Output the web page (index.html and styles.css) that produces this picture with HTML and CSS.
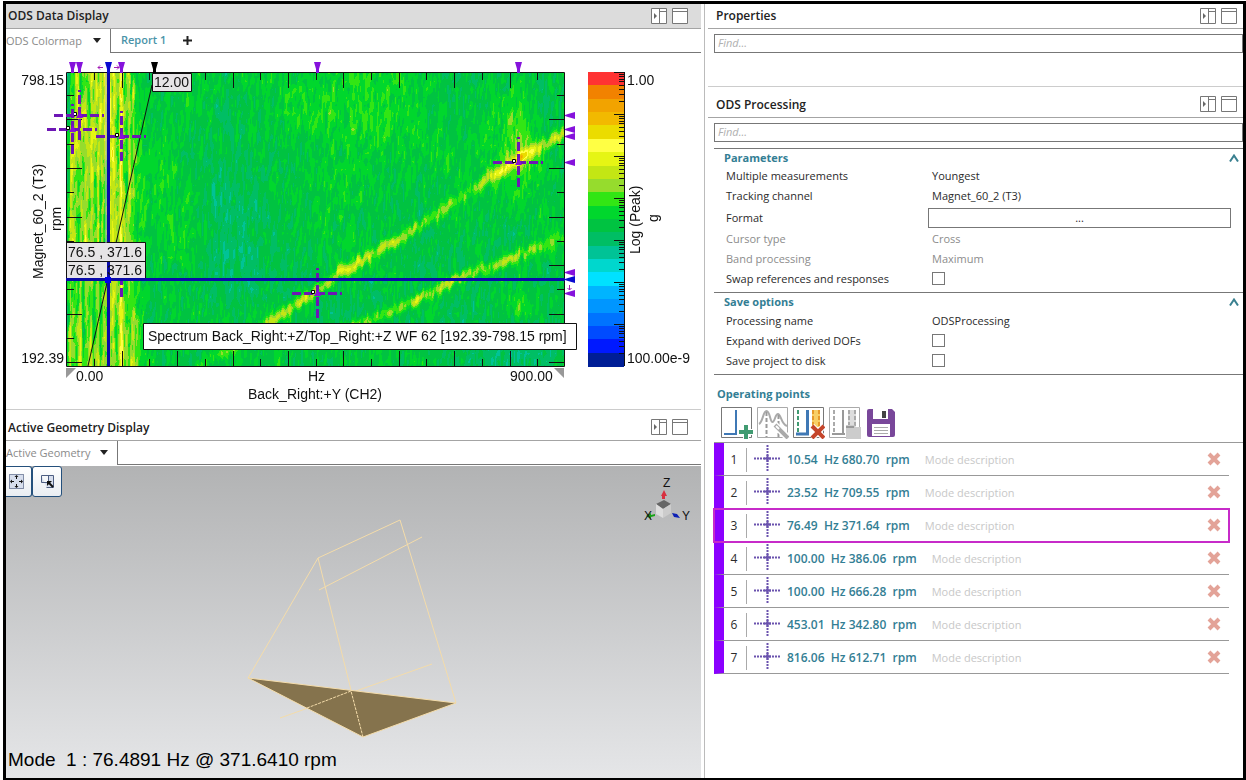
FILE: index.html
```html
<!DOCTYPE html>
<html lang="en">
<head>
<meta charset="utf-8">
<title>ODS Data Display</title>
<link rel="stylesheet" href="styles.css">
</head>
<body>
<svg class="defs" width="0" height="0" aria-hidden="true">
  <symbol id="i-dock" viewBox="0 0 16 16"><path d="M.5.5h15v15H.5zM8.500.5v15M8.500 3.500h7" fill="#fff" stroke="#777"/><path d="M3 5l3 3-3 3z" fill="#666"/></symbol>
  <symbol id="i-max" viewBox="0 0 16 16"><path d="M.5.5h15v15H.5zM.5 3.500h15" fill="#fff" stroke="#777"/></symbol>
  <symbol id="i-up" viewBox="0 0 10 8"><path d="M1 7.500L5 1.500 9 7.500" fill="none" stroke="#3a8090" stroke-width="2"/></symbol>
  <symbol id="i-x" viewBox="0 0 14 14"><path d="M2 2l10 10M12 2L2 12" stroke="#e3a398" stroke-width="4" fill="none"/></symbol>
  <symbol id="i-cross" viewBox="0 0 27 27"><path d="M0 13.500h27M13.500 0v27" stroke="#6a52ae" stroke-width="2" stroke-dasharray="2 1" fill="none"/><path d="M10 13.500h7M13.500 10v7" stroke="#6a52ae" stroke-width="2"/></symbol>
</svg>
<div class="frame">
  <main class="left">
    <section class="panel">
      <header class="bar bar-active"><h2>ODS Data Display</h2>
        <button class="icon" aria-label="Dock"><svg width="16" height="16"><use href="#i-dock"/></svg></button><button class="icon" aria-label="Maximize"><svg width="16" height="16"><use href="#i-max"/></svg></button></header>
      <nav class="tabs"><button class="tab-current">ODS Colormap<span class="caret"></span></button>
        <div class="tabs-rest"><button class="tab">Report 1</button><button class="add" aria-label="Add report"><svg width="9" height="9"><path d="M4.500 0v9M0 4.500h9" stroke="#222" stroke-width="2"/></svg></button></div></nav>
      <div class="plot">
        <svg id="chart" width="695" height="356" viewBox="6 53 695 356">
          <foreignObject x="67" y="73" width="498" height="293"><canvas id="map" width="498" height="293"></canvas></foreignObject>
          <path d="M152 85L88 366" stroke="#111" fill="none"/>
          <g id="ticks" stroke="#111" fill="none" shape-rendering="crispEdges"></g>
          <path d="M66.500 366.500V72.500H564.500V366.500z" stroke="#111" fill="none"/>
          <g id="crosses" stroke="#6d16b5" stroke-width="3" fill="none"></g>
          <path d="M66 243h79v35H66z" fill="#e6e4e6"/><path d="M66.500 242.500h79v36h-79zM66.500 261.500h79" stroke="#111" fill="none"/>
          <path d="M106 73v170" stroke="#bdb9c8"/>
          <path d="M108.500 73v169M108.500 262v104M66 279.500h499" stroke="#0a0aa8" stroke-width="3"/><path d="M105 277h6v6h-6z" fill="#0000e8"/>
          <path d="M152.500 73.500h39v18h-39z" fill="#e6e4e6" stroke="#111"/>
          <g id="markers"></g>
          <path d="M103 67.500h-5m2-2l-2 2 2 2M114 67.500h5m-2-2l2 2-2 2M569.500 285v5m-2-2l2 2 2-2" stroke="#a21bb5" fill="none"/>
          <path d="M66 368h10l-10 10zM554 368h10v10z" fill="#999"/>
          <g id="scale" shape-rendering="crispEdges"></g>
          <g class="labels">
            <text x="154" y="87">12.00</text><text x="68" y="257">76.5 , 371.6</text><text x="68" y="275">76.5 , 371.6</text>
            <text x="64" y="85" text-anchor="end">798.15</text><text x="64" y="363" text-anchor="end">192.39</text>
            <text x="76" y="381">0.00</text><text x="308" y="381">Hz</text><text x="510" y="381">900.00</text>
            <text x="248" y="399">Back_Right:+Y (CH2)</text>
            <text x="627" y="85">1.00</text><text x="627" y="363">100.00e-9</text>
            <text transform="translate(43 279) rotate(-90)">Magnet_60_2 (T3)</text><text transform="translate(61 231) rotate(-90)">rpm</text>
            <text transform="translate(640 254) rotate(-90)">Log (Peak)</text><text transform="translate(658 222) rotate(-90)">g</text>
          </g>
          <path d="M143.500 323.500h433v26h-433z" fill="#fff" stroke="#111"/>
          <text class="tip" x="148" y="341">Spectrum Back_Right:+Z/Top_Right:+Z WF 62 [192.39-798.15 rpm]</text>
        </svg>
      </div>
    </section>
    <section class="panel geometry">
      <header class="bar bar-tall"><h2>Active Geometry Display</h2>
        <button class="icon" aria-label="Dock"><svg width="16" height="16"><use href="#i-dock"/></svg></button><button class="icon" aria-label="Maximize"><svg width="16" height="16"><use href="#i-max"/></svg></button></header>
      <nav class="tabs"><button class="tab-current tab-geo">Active Geometry<span class="caret"></span></button><div class="tabs-rest"></div></nav>
      <div class="view">
        <svg class="model" width="695" height="312" viewBox="6 466 695 312">
          <g stroke="#f4dcaa" fill="none"><path d="M248 678L318 558 400 520 456 703M318 558L351 690M319 590L422 537M280 718L432 664"/>
          <path d="M248 678L456 703 363 737z" fill="#85734d"/><path d="M307 708L351 691 363 737" stroke-dasharray="3 1"/></g>
          <path d="M664 490l3 6h-2v3h-3v-3h-1z" fill="#d83040"/>
          <path d="M656 504l8-4 7 4-8 5z" fill="#666"/><path d="M656 504l7 5v9l-7-4z" fill="#ddd"/><path d="M663 509l8-5v9l-8 5z" fill="#ccc"/>
          <path d="M646 516l5-3v2l4-1v2l-4 1v2z" fill="#17a317"/><path d="M672 513l5 1 3 4-6-1z" fill="#0c20b5"/>
          <text class="axis" x="663" y="487">Z</text><text class="axis" x="644" y="520">X</text><text class="axis" x="682" y="520">Y</text>
        </svg>
        <div class="tools">
          <button class="tool tool-first" aria-label="Fit view"><svg width="15" height="15"><path d="M.5.5h14v14H.5z" fill="#d7deed" stroke="#1e315c" stroke-dasharray="1 1"/><path d="M7.500 5V2M7.500 10v3M5 7.500H2M10 7.500h3" stroke="#111"/><path d="M5.500 3h4l-2-2zM5.500 12h4l-2 2zM3 5.500v4l-2-2zM12 5.500v4l2-2z" fill="#111"/></svg></button><button class="tool" aria-label="Zoom region"><svg width="15" height="15"><path d="M1.500 1.500h12v12h-7M1.500 1.500v7h7v-7" fill="#d7deed" stroke="#4e5f83"/><path d="M13 13L9 9" stroke="#111" stroke-width="2"/><path d="M7 7h5l-5 5z" fill="#111"/></svg></button>
        </div>
        <p class="mode">Mode&nbsp; 1 : 76.4891 Hz @ 371.6410 rpm</p>
      </div>
    </section>
  </main>
  <aside class="right">
    <section class="props">
      <header class="bar"><h2>Properties</h2>
        <button class="icon" aria-label="Dock"><svg width="16" height="16"><use href="#i-dock"/></svg></button><button class="icon" aria-label="Maximize"><svg width="16" height="16"><use href="#i-max"/></svg></button></header>
      <input class="find" type="search" placeholder="Find..." aria-label="Find property">
    </section>
    <section>
      <header class="bar bar-tall"><h2>ODS Processing</h2>
        <button class="icon" aria-label="Dock"><svg width="16" height="16"><use href="#i-dock"/></svg></button><button class="icon" aria-label="Maximize"><svg width="16" height="16"><use href="#i-max"/></svg></button></header>
      <input class="find" type="search" placeholder="Find..." aria-label="Find setting">
      <div class="group"><h3>Parameters<button class="fold" aria-label="Collapse parameters"><svg width="10" height="8"><use href="#i-up"/></svg></button></h3>
        <div class="row"><span>Multiple measurements</span><span>Youngest</span></div>
        <div class="row"><span>Tracking channel</span><span>Magnet_60_2 (T3)</span></div>
        <div class="row row-button"><label for="format">Format</label><button id="format" class="wide">...</button></div>
        <div class="row muted"><span>Cursor type</span><span>Cross</span></div>
        <div class="row muted"><span>Band processing</span><span>Maximum</span></div>
        <div class="row"><label for="swap">Swap references and responses</label><input id="swap" type="checkbox"></div>
      </div>
      <div class="group group-last"><h3>Save options<button class="fold" aria-label="Collapse save options"><svg width="10" height="8"><use href="#i-up"/></svg></button></h3>
        <div class="row"><span>Processing name</span><span>ODSProcessing</span></div>
        <div class="row"><label for="dofs">Expand with derived DOFs</label><input id="dofs" type="checkbox"></div>
        <div class="row"><label for="disk">Save project to disk</label><input id="disk" type="checkbox"></div>
      </div>
      <h3 class="points-title">Operating points</h3>
      <div class="toolbar">
        <button aria-label="Add point"><svg width="32" height="32"><path d="M.5.5h30v30H.5z" fill="#fff" stroke="#777"/><path d="M3 27h12V3" fill="none" stroke="#3f78b5" stroke-width="2"/><path d="M25 17v15M17 25h15" stroke="#fff" stroke-width="6"/><path d="M25 18v14M18 25h14" stroke="#419b72" stroke-width="4"/></svg></button>
        <button aria-label="Auto pick"><svg width="32" height="32"><path d="M.5.5h30v30H.5z" fill="#fff" stroke="#aaa"/><path d="M2 17C6 15 6 4 9.500 4s3.500 11 6 11S18 7 21 7s3 10 9 12" fill="none" stroke="#aaa" stroke-width="2"/><path d="M9.500 5v25M21.500 8v22" stroke="#999" stroke-width="2" stroke-dasharray="4 2"/><path d="M18 18l13 13" stroke="#fff" stroke-width="7"/><path d="M18 18l13 13" stroke="#aaa" stroke-width="4"/><path d="M19 19l3 3" stroke="#fff" stroke-width="2"/></svg></button>
        <button aria-label="Delete points"><svg width="32" height="32"><path d="M.5.5h30v30H.5z" fill="#fff" stroke="#777"/><path d="M19 3h8v17h-8z" fill="#f8cf66"/><path d="M5 3v22" stroke="#419b72" stroke-width="2" stroke-dasharray="4 2"/><path d="M20 3v17M26 3v17" stroke="#e79a2a" stroke-width="2" stroke-dasharray="4 2"/><path d="M14.500 3v24M3 27h13" stroke="#3f78b5" stroke-width="3"/><path d="M19 19l12 12M31 19L19 31" stroke="#fff" stroke-width="6"/><path d="M19 19l12 12M31 19L19 31" stroke="#c4452b" stroke-width="4"/></svg></button>
        <button aria-label="Load points"><svg width="32" height="32"><path d="M.5.5h30v30H.5z" fill="#fff" stroke="#aaa"/><path d="M19 3h8v16h-8z" fill="#ddd"/><path d="M5 3v22M20 3v16M26 3v16" stroke="#aaa" stroke-width="2" stroke-dasharray="4 2"/><path d="M14 3v24M3 27h13" stroke="#999" stroke-width="2"/><path d="M17 18h8l2 2h5v12H17z" fill="#ccc"/><path d="M17 20h8" stroke="#999" stroke-width="2"/></svg></button>
        <button aria-label="Save points"><svg width="32" height="32"><path d="M2 4q0-2 2-2h23l3 3v23q0 2-2 2H4q-2 0-2-2z" fill="#79479a"/><path d="M8 2h15v10H8zM7 17h18v12H7z" fill="#fff"/><path d="M17 4h4v7h-4z" fill="#444"/><path d="M9 20.500h14M9 23.500h14M9 26.500h14" stroke="#aaa"/></svg></button>
      </div>
      <ol class="points" id="points"></ol>
    </section>
  </aside>
</div>
<script src="app.js"></script>
</body>
</html>
```
FILE: styles.css
```css
* { box-sizing: border-box; }
body { margin: 0; background: #fff; color: #2b2b2b; font: 12px/16px "Open Sans", "Noto Sans", sans-serif; }
h2, h3, p, ol { margin: 0; padding: 0; }
button { font: inherit; color: inherit; background: none; border: 0; padding: 0; }
svg { display: block; }
.defs { position: absolute; }
.frame { display: grid; grid-template-columns: minmax(0, 699fr) minmax(0, 538fr); min-height: calc(100vh - 1px); margin: 1px 0 0 3px; border: 3px solid #000; border-bottom-width: 2px; }
.left { display: flex; flex-direction: column; padding-right: 3px; border-right: 1px solid #bbb; min-width: 0; }
.panel { min-width: 0; overflow: hidden; }
.bar { display: flex; align-items: center; gap: 5px; height: 25px; padding: 0 6px 0 8px; border-bottom: 1px solid #a4a4a4; }
.bar h2 { flex: 1; font-size: 12px; font-weight: 600; color: #222; white-space: nowrap; }
.left .bar { padding-left: 2px; padding-right: 13px; }
.bar-active { background: #dcdcdc; }
.bar-tall, .left .bar-tall { height: 32px; border-top: 1px solid #ccc; padding-top: 5px; }
.icon { padding-bottom: 1px; }
.tabs { display: flex; height: 24px; }
.tab-current { display: flex; align-items: center; justify-content: space-between; width: 105px; padding: 0 9px 1px 0; border-right: 1px solid #777; color: #8a8a8a; font-size: 11px; white-space: nowrap; }
.tab-geo { width: 112px; }
.caret { border: 4px solid transparent; border-top: 5px solid #222; border-bottom: 0; }
.tabs-rest { flex: 1; display: flex; align-items: center; gap: 17px; padding: 0 0 1px 10px; border-bottom: 1px solid #777; }
.tab { font-size: 11px; font-weight: 600; color: #4a93a8; }
.plot { height: 356px; overflow: hidden; }
#map { display: block; }
.labels text, .tip, .axis { font-family: "Liberation Sans", Arial, sans-serif; fill: #111; font-size: 14px; }
.axis { font-size: 12px; }
.geometry { flex: 1; display: flex; flex-direction: column; }
.view { flex: 1; position: relative; display: flex; flex-direction: column; justify-content: space-between; margin-top: 1px; background: linear-gradient(#b2b3b4, #e5e6e8); min-height: 312px; }
.model { position: absolute; top: 0; left: 0; }
.tools { position: relative; display: flex; }
.tool { display: grid; place-items: center; width: 30px; height: 31px; background: linear-gradient(#fff, #e9edf2); border: 1px solid #24507c; border-radius: 3px; }
.tool-first { width: 26px; border-left: 0; border-radius: 0 3px 3px 0; padding-right: 4px; }
.mode { position: relative; padding: 0 2px 8px; color: #000; font: 19px/20px "Liberation Sans", Arial, sans-serif; white-space: nowrap; }
.right { padding-left: 3px; min-width: 0; }
.props { height: 82px; }
.find { display: block; width: calc(100% - 6px); height: 19px; margin: 5px 0 0 6px; padding: 0 3px 2px; border: 1px solid #777; border-radius: 0; background: #fff; font: italic 11px/16px "Open Sans", sans-serif; -webkit-appearance: none; appearance: none; outline: 0; }
.find::placeholder { color: #b0b0b0; }
.group { margin-left: 6px; border-top: 1px solid #777; padding-bottom: 3px; }
.find + .group { margin-top: 6px; }
.group-last { border-bottom: 1px solid #777; }
h3 { display: flex; justify-content: space-between; align-items: center; height: 17px; padding: 0 4px 0 10px; color: #337e94; font-size: 11px; font-weight: 700; }
.group-last h3 { height: 18px; }
.row { display: grid; grid-template-columns: 206px 1fr; align-items: center; height: 20px; padding: 0 12px; font-size: 11px; white-space: nowrap; }
.row input { appearance: none; width: 13px; height: 13px; margin: 0 0 2px; border: 1px solid #777; background: #fff; }
.row-button { height: 23px; grid-template-columns: 202px 1fr; }
.wide { height: 20px; border: 1px solid #777; background: #fff; }
.muted { color: #8c8c8c; }
.points-title { height: 18px; margin-top: 10px; padding-left: 9px; }
.toolbar { display: flex; gap: 4px; height: 39px; padding: 4px 0 0 13px; }
.toolbar button { height: 32px; }
.points { list-style: none; margin-left: 6px; border-top: 1px solid #999; }
.point { display: flex; align-items: center; height: 33px; margin-right: 14px; padding: 2px 8px 0 0; border-bottom: 1px solid #999; border-left: 10px solid #8a00ff; }
.num { width: 23px; height: 24px; padding-right: 2px; border-right: 1px solid #aaa; text-align: center; line-height: 24px; }
.cross { margin: 0 6px 4px 7px; }
.freq { color: #337e94; font-size: 12px; font-weight: 600; white-space: pre; }
.desc { flex: 1; min-width: 0; margin-left: 15px; padding: 0; border: 0; background: none; font: 11px/16px "Open Sans", sans-serif; }
.desc::placeholder { color: #c8c8c8; }
.del { margin-bottom: 3px; }
.selected { outline: 2px solid #c72bc9; outline-offset: -1px; border-bottom-color: transparent; }
```
FILE: app.js
```js
const palette = ['#ff3333','#f28200','#f2a300','#f2b900','#ebdc00','#ffff44','#e6f514','#c3e614','#96dc2d','#32e614','#00d72d','#00c341','#00be64','#00c396','#00d7cd','#00e1ff','#00b4ff','#0096ff','#0073ff','#004bff','#0019ff','#001e96'];
const rgb = palette.map(c => [1, 3, 5].map(i => parseInt(c.slice(i, i + 2), 16)));

// Colormap field: smooth hashed noise stretched along the rpm axis, plus order lines.
function hash(a, b, s) {
  let h = Math.imul(a, 374761393) + Math.imul(b, 668265263) + Math.imul(s, 2147483647);
  h = Math.imul(h ^ (h >>> 13), 1274126177);
  return ((h ^ (h >>> 16)) >>> 0) / 4294967295;
}
function noise(x, y, s) {
  const i = Math.floor(x), j = Math.floor(y), u = x - i, v = y - j;
  const a = hash(i, j, s) * (1 - u) + hash(i + 1, j, s) * u;
  const b = hash(i, j + 1, s) * (1 - u) + hash(i + 1, j + 1, s) * u;
  return a * (1 - v) + b * v - 0.5;
}
function along(pts, x) {
  for (let k = 1; k < pts.length; k++) {
    if (x <= pts[k][0]) {
      const [x0, y0] = pts[k - 1], [x1, y1] = pts[k];
      return y0 + (y1 - y0) * (x - x0) / (x1 - x0);
    }
  }
  return pts[pts.length - 1][1];
}
const upper = [[190, 372], [277, 318], [340, 273], [402, 237], [440, 212], [490, 176], [530, 152], [566, 133]];
const lower = [[330, 335], [380, 315], [430, 293], [465, 275], [500, 262], [540, 245], [566, 236]];
const blob = (x, y, cx, cy, rx, ry) => Math.exp(-(((x - cx) / rx) ** 2) - (((y - cy) / ry) ** 2));
const ctx = document.getElementById('map').getContext('2d');
const img = ctx.createImageData(498, 293);
for (let py = 0; py < 293; py++) {
  for (let px = 0; px < 498; px++) {
    const x = px + 67, y = py + 73;
    const slant = px + py * 0.06;
    const n = noise(slant / 1.7, py / 8, 1) * 2.400 + noise(slant / 3, py / 16, 2) * 1.5;
    let v = 10.900 - n + noise(px / 40, py / 40, 3) * 1.2;
    v -= 1.5 * blob(x, y, 365, 105, 65, 65) + 0.8 * blob(x, y, 175, 215, 30, 110);
    v += 0.7 * blob(x, y, 230, 230, 70, 80) + 0.9 * blob(x, y, 480, 340, 120, 50);
    v -= 2 * blob(x, y, 518, 135, 14, 45) + 2 * blob(x, y, 518, 305, 9, 12);
    const jitter = noise(px / 2.500, py / 30, 8) * 7;
    const gain = 1 + noise(px / 14, py / 14, 9) * 0.8;
    if (x > 185) v -= gain * (x < 265 ? 2 : x > 445 && x < 490 ? 2.600 : 3.500) * Math.exp(-(((y + jitter - along(upper, x)) / 6.500) ** 2));
    if (x > 330) v -= gain * (x > 410 && x < 520 ? 3.300 : 2.200) * Math.exp(-(((y + jitter - along(lower, x)) / 6) ** 2));
    v -= 1.5 * blob(x, y, 518, 162, 22, 12);
    const left = 1 / (1 + Math.exp((x - 139) / 3.500));
    v -= left * (2.600 + noise(px / 2.200, py / 150, 5) * 4 + noise(px / 1.8, py / 20, 6) * 2.600);
    if (x < 70) v += 2;
    v -= 2.200 * Math.exp(-(((x - 121) / 1.400) ** 2)) + 1.3 * blob(x, y, 95, 110, 25, 90);
    const c = rgb[Math.max(1, Math.min(15, Math.round(v)))];
    const o = (py * 498 + px) * 4;
    img.data[o] = c[0]; img.data[o + 1] = c[1]; img.data[o + 2] = c[2]; img.data[o + 3] = 255;
  }
}
ctx.putImageData(img, 0, 0);

let d = '';
for (let k = 0; k < 17; k++) {
  const x = Math.round(94 + k * 27.700) + 0.5, len = k % 2 ? 15 : 7;
  d += `M${x} 73v${len}M${x} 366v${-len}`;
}
for (let k = 0; k < 12; k++) {
  const y = Math.round(95 + k * 24.300) + 0.5, len = k % 2 ? 15 : 7;
  d += `M67 ${y}h${len}M564 ${y}h${-len}`;
}
document.getElementById('ticks').innerHTML = `<path d="${d}"/>`;

document.getElementById('crosses').innerHTML = [[79, 115], [72, 129], [121, 136], [518, 162], [317, 293], [121, 272]].map(([x, y]) =>
  `<path stroke-dasharray="9 3" d="M${x - 25} ${y + 0.5}h50M${x + 0.5} ${y + 25}v-50"/><path stroke="none" fill="#8a0fd8" d="M${x - 3} ${y + 3}l4-7 3 7z"/><path stroke="#000" stroke-width="1" fill="#fff" d="M${x - 5.500} ${y - 2.500}h3v3h-3z"/>`).join('');

const topMarks = [72, 79, 121, 317, 518].map(x => [x, '#8512dc']).concat([[108, '#0a0ad0'], [154, '#000']]);
const side = [115, 129, 136, 162, 272, 293].map(y => [y, '#8512dc']).concat([[279, '#0a0ad0']]);
document.getElementById('markers').innerHTML =
  topMarks.map(([x, c]) => `<path fill="${c}" d="M${x - 3} 62h7l-2 7v4h-3v-4z"/>`).join('') +
  side.map(([y, c]) => `<path fill="${c}" d="M575 ${y - 3}v7l-7-2-3-1v-1l3-1z"/>`).join('');

const step = 294 / 22;
const bars = palette.map((c, i) => `<rect x="588" y="${72 + Math.round(i * step)}" width="36" height="14" fill="${c}"/>`).join('');
let s = 'M624.5 72V366';
for (let k = 0; k < 7; k++) {
  for (let m = 10; m > 1; m--) s += `M624 ${Math.round(72 + 42 * (k + 1 - Math.log10(m))) + 0.5}h${m === 10 ? -10 : -5}`;
}
document.getElementById('scale').innerHTML = bars + `<path stroke="#111" d="${s}"/>`;

const points = [['10.54', '680.70'], ['23.52', '709.55'], ['76.49', '371.64'], ['100.00', '386.06'], ['100.00', '666.28'], ['453.01', '342.80'], ['816.06', '612.71']];
document.getElementById('points').innerHTML = points.map(([hz, rpm], i) =>
  `<li class="point${i === 2 ? ' selected' : ''}"><span class="num">${i + 1}</span><svg class="cross" width="27" height="27"><use href="#i-cross"/></svg><span class="freq">${hz}  Hz ${rpm}  rpm</span><input class="desc" placeholder="Mode description" aria-label="Description of mode ${i + 1}"><button class="del" aria-label="Delete point ${i + 1}"><svg width="14" height="14"><use href="#i-x"/></svg></button></li>`).join('');
```
